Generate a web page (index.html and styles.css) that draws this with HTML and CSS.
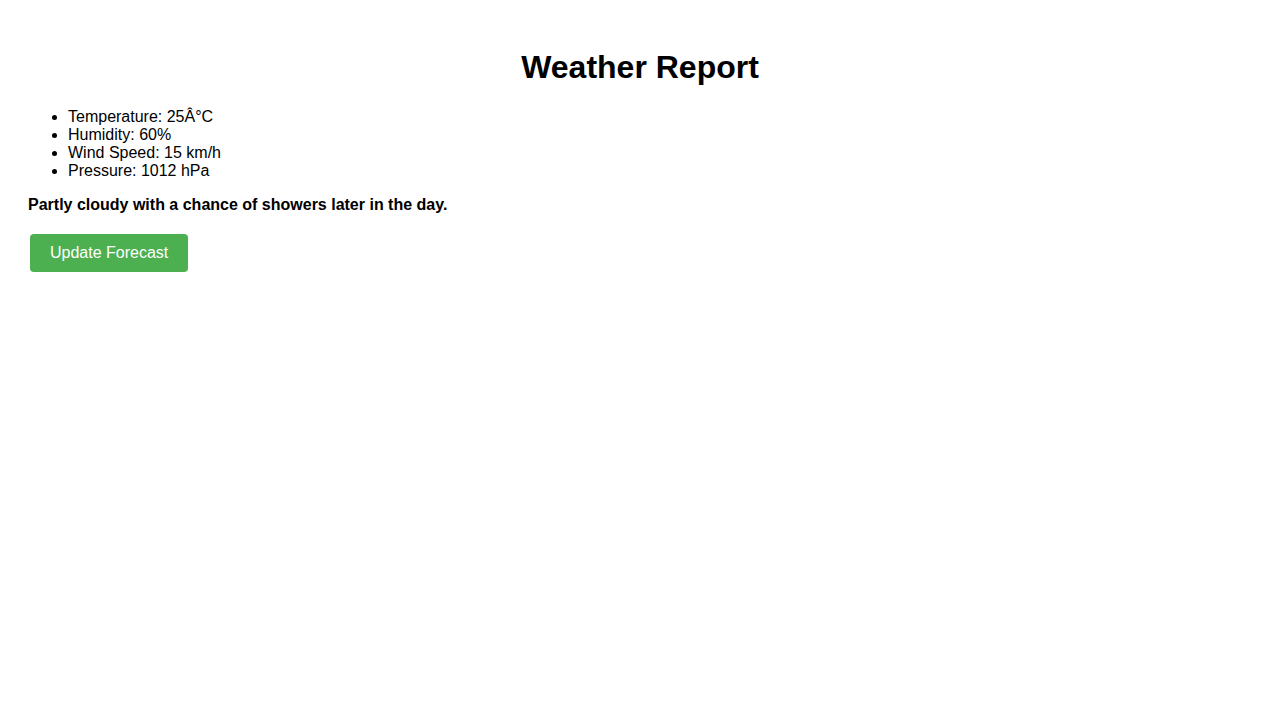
FILE: index.html
```html
<!DOCTYPE html>
<html>
<head>
<meta charset="utf-8">
<title>Weather Report</title>
<link rel="stylesheet" href="styles.css">
</head>
<body>
<h1 class="title">Weather Report</h1>
<ul class="stats">
<li>Temperature: 25Â°C</li>
<li>Humidity: 60%</li>
<li>Wind Speed: 15 km/h</li>
<li>Pressure: 1012 hPa</li>
</ul>
<p class="summary">Partly cloudy with a chance of showers later in the day.</p>
<button class="update">Update Forecast</button>
</body>
</html>
```
FILE: styles.css
```css
body {
  margin: 8px;
  padding: 20px;
  font-family: "Liberation Sans", Arial, sans-serif;
  font-size: 16px;
  color: #000;
  background: #fff;
}
.title {
  text-align: center;
  font-size: 32px;
  font-weight: bold;
  margin: 21.44px 0;
}
.stats {
  margin: 16px 0;
  padding-left: 40px;
}
.summary {
  font-weight: bold;
  margin: 16px 0;
}
.update {
  margin: 4px 2px;
  padding: 10px 20px;
  font-family: "Liberation Sans", Arial, sans-serif;
  font-size: 16px;
  color: #fff;
  background: #4caf50;
  border: none;
  border-radius: 4px;
  cursor: pointer;
}
```
